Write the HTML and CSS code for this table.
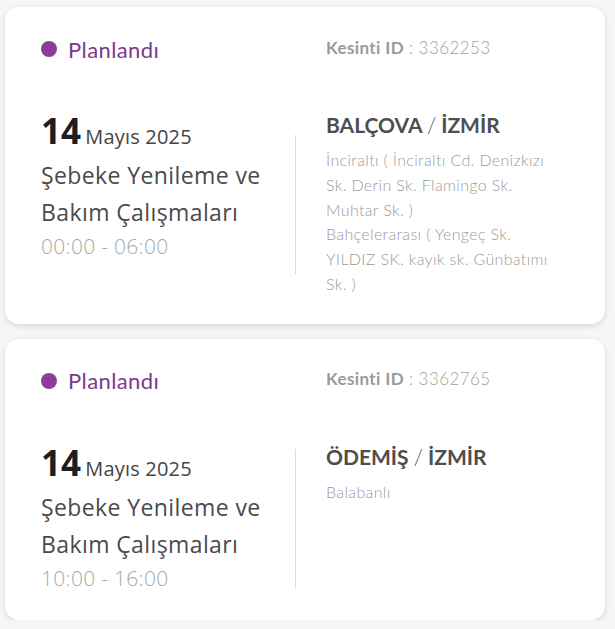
FILE: index.html
```html
<!DOCTYPE html>
<html lang="tr">
<head>
<meta charset="utf-8">
<link rel="stylesheet" href="styles.css">
</head>
<body>
<div class="list">
  <div class="card">
    <div class="head">
      <div class="status"><span class="dot"></span>Planlandı</div>
      <div class="kid"><b>Kesinti ID</b> : 3362253</div>
    </div>
    <div class="body">
      <div class="left">
        <div class="date"><span class="day">14</span> <span class="month">Mayıs 2025</span></div>
        <div class="title">Şebeke Yenileme ve Bakım Çalışmaları</div>
        <div class="time">00:00 - 06:00</div>
      </div>
      <div class="divider"></div>
      <div class="right">
        <div class="place">BALÇOVA <span class="slash">/</span> İZMİR</div>
        <div class="addr">İnciraltı ( İnciraltı Cd. Denizkızı Sk. Derin Sk. Flamingo Sk. Muhtar Sk. )</div>
        <div class="addr">Bahçelerarası ( Yengeç Sk. YILDIZ SK. kayık sk. Günbatımı Sk. )</div>
      </div>
    </div>
  </div>
  <div class="card">
    <div class="head">
      <div class="status"><span class="dot"></span>Planlandı</div>
      <div class="kid"><b>Kesinti ID</b> : 3362765</div>
    </div>
    <div class="body">
      <div class="left">
        <div class="date"><span class="day">14</span> <span class="month">Mayıs 2025</span></div>
        <div class="title">Şebeke Yenileme ve Bakım Çalışmaları</div>
        <div class="time">10:00 - 16:00</div>
      </div>
      <div class="divider"></div>
      <div class="right">
        <div class="place">ÖDEMİŞ <span class="slash">/</span> İZMİR</div>
        <div class="addr">Balabanlı</div>
      </div>
    </div>
  </div>
</div>
</body>
</html>
```

FILE: styles.css
```css
html, body {
  margin: 0;
  padding: 0;
  background: #f6f6f6;
}
.list {
  padding: 7px 10px 0 5px;
  display: flex;
  flex-direction: column;
  gap: 15px;
}
.card {
  background: #fff;
  border-radius: 14px;
  box-shadow: 0 2px 6px rgba(0, 0, 0, 0.13);
  padding: 26px 36px 27px 36px;
}
.head {
  display: flex;
  align-items: center;
  height: 32px;
}
.status {
  width: 285px;
  display: flex;
  align-items: center;
  font-family: Lato, "Noto Sans", sans-serif;
  font-size: 22px;
  letter-spacing: 0.4px;
  color: #7b3a8a;
}
.dot {
  width: 16px;
  height: 16px;
  border-radius: 50%;
  background: #8a3e96;
  margin-right: 11px;
}
.kid {
  font-family: Lato, "Noto Sans", sans-serif;
  font-size: 17px;
  letter-spacing: 0.4px;
  color: #a0a0a0;
  font-weight: 300;
  margin-top: -4px;
}
.kid b {
  font-weight: 700;
  color: #9a9a9a;
}
.body {
  display: flex;
  margin-top: 47px;
}
.left {
  flex: 0 0 254px;
  font-family: "Open Sans", "Noto Sans", sans-serif;
}
.date {
  line-height: 38px;
  color: #333;
}
.day {
  font-size: 35px;
  font-weight: 700;
  color: #1d1d25;
}
.month {
  font-size: 20px;
  letter-spacing: 0.2px;
  color: #444;
}
.title {
  font-size: 23px;
  letter-spacing: 0.4px;
  line-height: 37px;
  color: #4a4a4a;
}
.time {
  font-size: 21px;
  font-weight: 300;
  letter-spacing: 0.3px;
  line-height: 30px;
  color: #a8a8a8;
}
.divider {
  flex: 0 0 1px;
  height: 139px;
  background: #dcdcdc;
  align-self: center;
}
.right {
  flex: 1;
  padding-left: 30px;
  padding-right: 12px;
  font-family: Lato, "Noto Sans", sans-serif;
}
.place {
  font-size: 21px;
  font-weight: 700;
  color: #4e4e4e;
  line-height: 30px;
  margin-top: -2px;
  margin-bottom: 8px;
}
.slash {
  font-weight: 300;
}
.addr {
  font-size: 16px;
  letter-spacing: 0.35px;
  line-height: 24.8px;
  color: #9b9b9b;
  font-weight: 300;
}
```
